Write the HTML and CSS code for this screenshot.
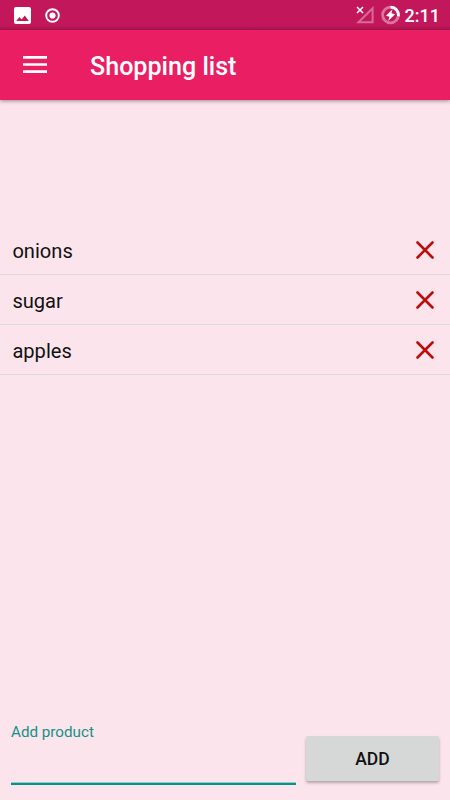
FILE: index.html
```html
<!DOCTYPE html>
<html lang="en">
<head>
<meta charset="utf-8">
<title>Shopping list</title>
<link rel="stylesheet" href="styles.css">
</head>
<body>
<div class="status">
  <div class="status-left">
    <svg width="17" height="17" viewBox="0 0 17 17"><path fill="#fff" fill-rule="evenodd" d="M2 0h13q2 0 2 2v13q0 2-2 2H2q-2 0-2-2V2q0-2 2-2zM2.300 14h12.500l-4-5.600-3.200 4.200L5.400 9.900z"/></svg>
    <svg width="15" height="15" viewBox="0 0 15 15"><circle cx="7.500" cy="7.500" r="6.300" fill="none" stroke="#fff" stroke-width="1.900"/><circle cx="7.500" cy="7.500" r="3.100" fill="#fff"/></svg>
  </div>
  <div class="status-right">
    <svg width="18" height="18" viewBox="0 0 18 18"><path fill="none" stroke="#fff" stroke-opacity=".36" stroke-width="2" d="M16.600 2.300v14H2.500z"/><path stroke="#fff" stroke-width="1.500" d="M1 1l6 6M7 1L1 7"/></svg>
    <svg class="battery" width="20" height="20" viewBox="0 0 20 20"><circle cx="10.500" cy="10" r="7.900" fill="none" stroke="#fff" stroke-opacity=".4" stroke-width="2.800"/><path fill="none" stroke="#fff" stroke-width="2.800" d="M10.500 2.100a7.900 7.900 0 0 1 7.800 9.200"/><path fill="#fff" d="M12.600 4.300L6 10.700l3.500 1-1.400 4.200 7-6.600-3.700-1z"/></svg>
    <span class="clock">2:11</span>
  </div>
</div>
<header class="toolbar">
  <svg width="24" height="18" viewBox="0 0 24 18"><path fill="#fff" d="M0 0h24v2.700H0zM0 7.200h24v2.600H0zM0 14.300h24V17H0z"/></svg>
  <h1>Shopping list</h1>
</header>
<main>
  <ul class="list">
    <li><span>onions</span><svg class="remove" viewBox="0 0 18 18"><path d="M1.500 1.500l15 15M16.500 1.500l-15 15"/></svg></li>
    <li><span>sugar</span><svg class="remove" viewBox="0 0 18 18"><path d="M1.500 1.500l15 15M16.500 1.500l-15 15"/></svg></li>
    <li><span>apples</span><svg class="remove" viewBox="0 0 18 18"><path d="M1.500 1.500l15 15M16.500 1.500l-15 15"/></svg></li>
  </ul>
</main>
<footer class="entry">
  <label class="field"><span>Add product</span><input type="text"></label>
  <button type="button">ADD</button>
</footer>
</body>
</html>
```
FILE: styles.css
```css
* { box-sizing: border-box; }
body {
  margin: 0;
  height: 800px;
  display: flex;
  flex-direction: column;
  overflow: hidden;
  background: #fbe4eb;
  color: #111;
  font-family: Roboto, sans-serif;
}
svg { display: block; flex: none; }
.status {
  height: 30px;
  flex: none;
  display: flex;
  justify-content: space-between;
  background: linear-gradient(#c2185b 25px, #b01551 30px);
  color: #fff;
}
.status-left {
  display: flex;
  align-items: center;
  gap: 14px;
  padding-left: 14px;
}
.status-right {
  display: flex;
  align-items: center;
  padding-right: 10px;
}
.battery { margin-left: 6px; }
.clock {
  margin-left: 5px;
  padding-top: 2px;
  font-size: 18px;
  line-height: 20px;
  font-weight: 500;
}
.toolbar {
  height: 70px;
  flex: none;
  display: flex;
  align-items: center;
  padding-left: 23px;
  background: #e91e63;
  color: #fff;
  box-shadow: 0 1px 4px rgba(0, 0, 0, .4);
}
.toolbar h1 {
  margin: 4px 0 0 43px;
  font-size: 25.100px;
  line-height: 30px;
  font-weight: 500;
}
main {
  flex: 1;
  padding-top: 125px;
}
.list {
  margin: 0;
  padding: 0;
  list-style: none;
}
.list li {
  height: 50px;
  display: flex;
  align-items: center;
  justify-content: space-between;
  padding: 1px 16px 0 12.400px;
  border-bottom: 1px solid #d9dcdd;
  font-size: 20.100px;
}
.list span { padding-top: 2px; }
.remove {
  width: 18px;
  height: 18px;
  fill: none;
  stroke: #b90e0e;
  stroke-width: 2.600;
  stroke-linecap: round;
}
.entry {
  height: 80px;
  flex: none;
  display: flex;
  align-items: flex-start;
  gap: 10px;
  padding: 0 11px;
}
.field {
  width: 285px;
  height: 65px;
  display: flex;
  flex-direction: column;
  border-bottom: 2px solid #009688;
  box-shadow: inset 0 -1px #9fc9c5;
  color: #159184;
  font-size: 15.200px;
  line-height: 24px;
}
.field input {
  flex: 1;
  min-height: 0;
  padding: 0;
  border: 0;
  outline: 0;
  background: transparent;
  font: 20px Roboto, sans-serif;
}
button {
  width: 133px;
  height: 45px;
  margin-top: 16px;
  padding: 1px 0 0;
  border: 0;
  border-radius: 2px;
  background: #d6d7d7;
  color: #111;
  box-shadow: 0 2px 3px rgba(0, 0, 0, .28);
  font: 500 17.500px/20px Roboto, sans-serif;
}
```
